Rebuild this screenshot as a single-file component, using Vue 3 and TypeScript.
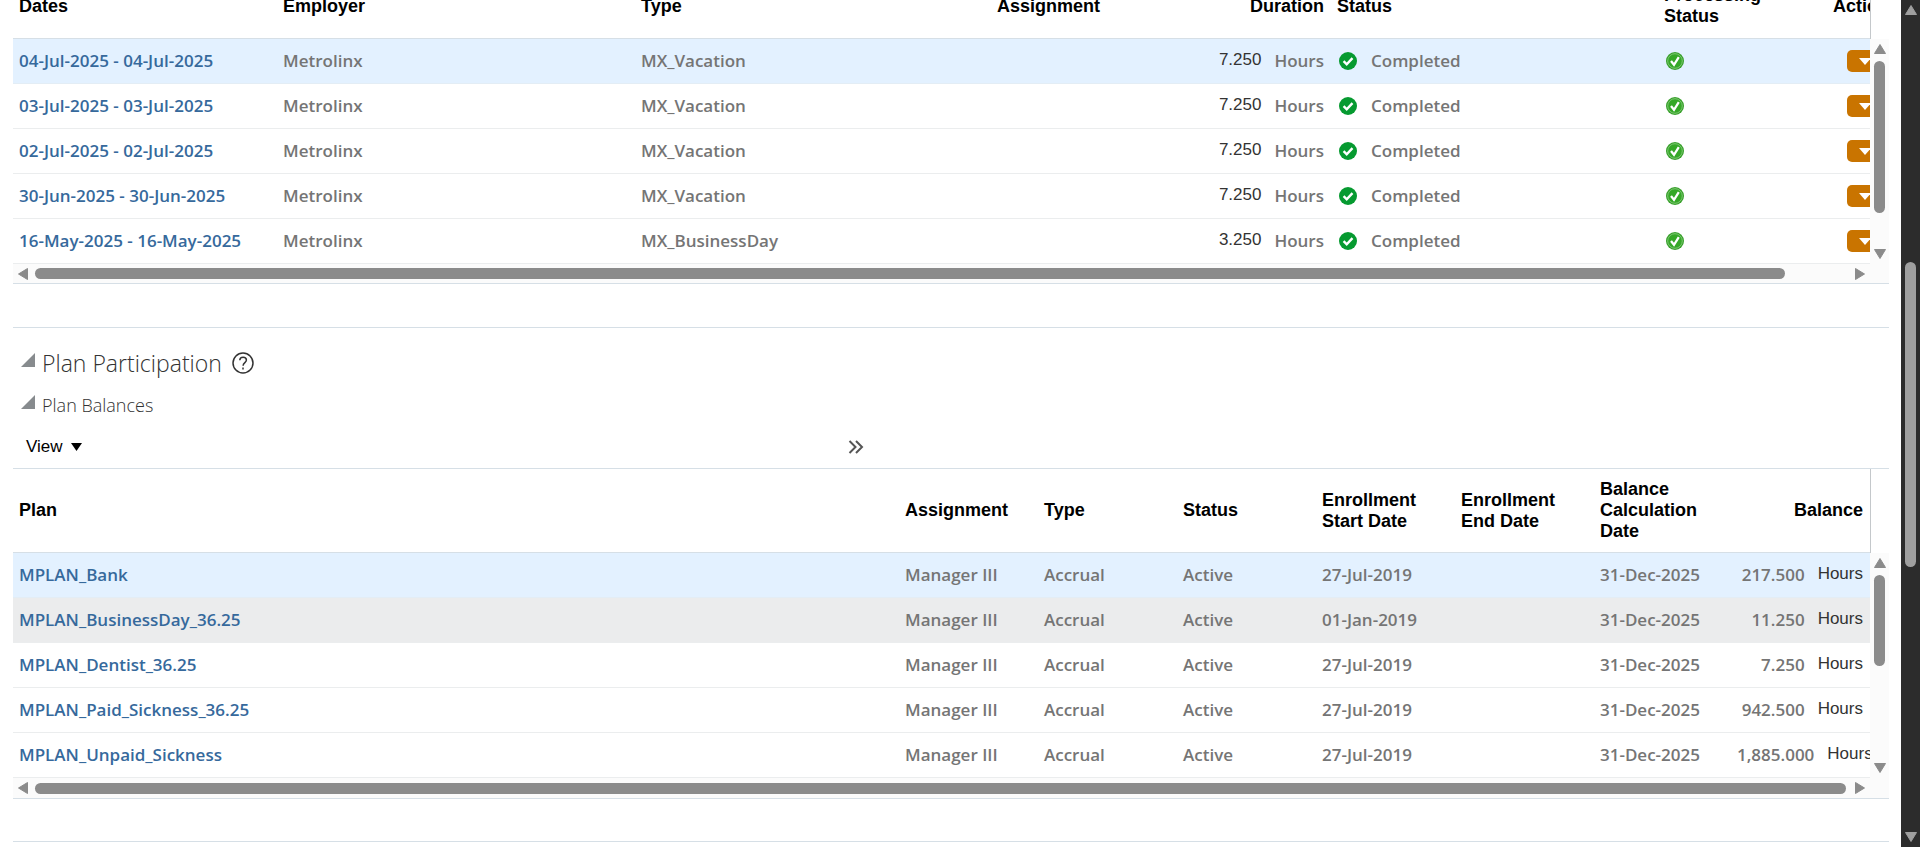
<script setup lang="ts">
import { ref } from 'vue'

interface Absence {
  dates: string
  type: string
  duration: string
}

interface Plan {
  name: string
  start: string
  balance: string
}

const absences: Absence[] = [
  { dates: '04-Jul-2025 - 04-Jul-2025', type: 'MX_Vacation', duration: '7.250' },
  { dates: '03-Jul-2025 - 03-Jul-2025', type: 'MX_Vacation', duration: '7.250' },
  { dates: '02-Jul-2025 - 02-Jul-2025', type: 'MX_Vacation', duration: '7.250' },
  { dates: '30-Jun-2025 - 30-Jun-2025', type: 'MX_Vacation', duration: '7.250' },
  { dates: '16-May-2025 - 16-May-2025', type: 'MX_BusinessDay', duration: '3.250' },
]

const plans: Plan[] = [
  { name: 'MPLAN_Bank', start: '27-Jul-2019', balance: '217.500' },
  { name: 'MPLAN_BusinessDay_36.25', start: '01-Jan-2019', balance: '11.250' },
  { name: 'MPLAN_Dentist_36.25', start: '27-Jul-2019', balance: '7.250' },
  { name: 'MPLAN_Paid_Sickness_36.25', start: '27-Jul-2019', balance: '942.500' },
  { name: 'MPLAN_Unpaid_Sickness', start: '27-Jul-2019', balance: '1,885.000' },
]

const selectedAbsence = ref(0)
const selectedPlan = ref(0)
const highlightedPlan = ref(1)
</script>

<template>
  <div class="window">
    <main class="page">
      <section class="panel absences" aria-label="Absences">
        <div class="viewport">
          <table class="grid grid-absences">
            <colgroup>
              <col class="w-dates" />
              <col />
              <col class="w-type" />
              <col class="w-std" />
              <col class="w-duration" />
              <col class="w-status" />
              <col class="w-std" />
              <col class="w-std" />
            </colgroup>
            <thead>
              <tr>
                <th>Dates</th>
                <th>Employer</th>
                <th>Type</th>
                <th>Assignment</th>
                <th class="right">Duration</th>
                <th>Status</th>
                <th>Processing Status</th>
                <th class="center">Actions</th>
              </tr>
            </thead>
            <tbody>
              <tr
                v-for="(row, i) in absences"
                :key="row.dates"
                :class="{ selected: i === selectedAbsence }"
                @click="selectedAbsence = i"
              >
                <td><a href="#">{{ row.dates }}</a></td>
                <td>Metrolinx</td>
                <td>{{ row.type }}</td>
                <td></td>
                <td class="right"><span class="plain">{{ row.duration }}</span><span class="unit">Hours</span></td>
                <td>
                  <div class="status">
                    <svg width="18" height="18" viewBox="0 0 18 18" aria-hidden="true">
                      <circle cx="9" cy="9" r="9" fill="#069a30" />
                      <path d="M4.6 9.2l3.1 3.1 5.8-6.2" fill="none" stroke="#fff" stroke-width="2.4" />
                    </svg>
                    Completed
                  </div>
                </td>
                <td>
                  <div class="status">
                    <svg width="18" height="18" viewBox="0 0 18 18" role="img" aria-label="Processed">
                      <circle cx="9" cy="9" r="9" fill="#38a02b" />
                      <circle cx="9" cy="9" r="7.3" fill="#35a827" stroke="#7cc772" stroke-width="1" />
                      <path d="M5 9l3 3.8 4.8-7.6" fill="none" stroke="#fff" stroke-width="2.3" />
                    </svg>
                  </div>
                </td>
                <td>
                  <button class="action" type="button" aria-label="Actions">
                    <svg width="12" height="7" viewBox="0 0 12 7" aria-hidden="true">
                      <path d="M0 0h12L6 7z" fill="#fff" />
                    </svg>
                  </button>
                </td>
              </tr>
            </tbody>
          </table>
        </div>
        <div class="gutter gutter-absences">
          <div class="gutter-head"></div>
          <div class="vscroll">
            <svg class="tri" width="12" height="10" viewBox="0 0 12 10"><path d="M6 0.5L11.5 9.5H0.5z" /></svg>
            <div class="vtrack"><div class="thumb" :style="{ height: '84%' }"></div></div>
            <svg class="tri" width="12" height="10" viewBox="0 0 12 10"><path d="M0.5 0.5h11L6 9.5z" /></svg>
          </div>
        </div>
        <div class="hscroll">
          <svg class="tri" width="10" height="12" viewBox="0 0 10 12"><path d="M9.5 0.5v11L0.5 6z" /></svg>
          <div class="htrack"><div class="thumb" :style="{ width: '96.5%' }"></div></div>
          <svg class="tri" width="10" height="12" viewBox="0 0 10 12"><path d="M0.5 0.5L9.5 6l-9 5.5z" /></svg>
        </div>
      </section>

      <section class="participation">
        <h1 class="title">
          <button class="disclose" type="button" aria-label="Collapse Plan Participation">
            <svg width="14" height="14" viewBox="0 0 14 14"><path d="M14 0v14H0z" fill="#878b8e" /></svg>
          </button>
          Plan Participation
          <button class="help" type="button" aria-label="Help">
            <svg width="22" height="22" viewBox="0 0 22 22" fill="none" stroke="#333" stroke-width="1.5">
              <circle cx="11" cy="11" r="10" />
              <path d="M7.8 8.3c0-1.9 1.4-3.1 3.3-3.1s3.3 1.2 3.3 2.9c0 2.5-3.3 2.6-3.3 5.6" />
              <path d="M11 15.6v1.8" />
            </svg>
          </button>
        </h1>
        <h2 class="subtitle">
          <button class="disclose" type="button" aria-label="Collapse Plan Balances">
            <svg width="14" height="14" viewBox="0 0 14 14"><path d="M14 0v14H0z" fill="#878b8e" /></svg>
          </button>
          Plan Balances
        </h2>
        <div class="toolbar">
          <button class="view" type="button">
            View
            <svg width="11" height="9" viewBox="0 0 11 9" aria-hidden="true"><path d="M0 1h11L5.5 9z" fill="#000" /></svg>
          </button>
          <button class="more" type="button" aria-label="More tools">
            <svg width="16" height="14" viewBox="0 0 16 14" fill="none" stroke="#555" stroke-width="2">
              <path d="M1.5 1l6 6-6 6M8 1l6 6-6 6" />
            </svg>
          </button>
        </div>

        <div class="panel balances">
          <div class="viewport">
            <table class="grid grid-balances">
              <colgroup>
                <col />
                <col v-for="n in 7" :key="n" class="w-std" />
              </colgroup>
              <thead>
                <tr>
                  <th>Plan</th>
                  <th>Assignment</th>
                  <th>Type</th>
                  <th>Status</th>
                  <th>Enrollment Start Date</th>
                  <th>Enrollment End Date</th>
                  <th>Balance Calculation Date</th>
                  <th class="right">Balance</th>
                </tr>
              </thead>
              <tbody>
                <tr
                  v-for="(plan, i) in plans"
                  :key="plan.name"
                  :class="{ selected: i === selectedPlan, hovered: i === highlightedPlan }"
                  @click="selectedPlan = i"
                >
                  <td><a href="#">{{ plan.name }}</a></td>
                  <td>Manager III</td>
                  <td>Accrual</td>
                  <td>Active</td>
                  <td>{{ plan.start }}</td>
                  <td></td>
                  <td>31-Dec-2025</td>
                  <td class="right">{{ plan.balance }}<span class="plain unit">Hours</span></td>
                </tr>
              </tbody>
            </table>
          </div>
          <div class="gutter gutter-balances">
            <div class="gutter-head"></div>
            <div class="vscroll">
              <svg class="tri" width="12" height="10" viewBox="0 0 12 10"><path d="M6 0.5L11.5 9.5H0.5z" /></svg>
              <div class="vtrack"><div class="thumb" :style="{ height: '50%' }"></div></div>
              <svg class="tri" width="12" height="10" viewBox="0 0 12 10"><path d="M0.5 0.5h11L6 9.5z" /></svg>
            </div>
          </div>
          <div class="hscroll">
            <svg class="tri" width="10" height="12" viewBox="0 0 10 12"><path d="M9.5 0.5v11L0.5 6z" /></svg>
            <div class="htrack"><div class="thumb" :style="{ width: '99.9%' }"></div></div>
            <svg class="tri" width="10" height="12" viewBox="0 0 10 12"><path d="M0.5 0.5L9.5 6l-9 5.5z" /></svg>
          </div>
        </div>
      </section>

      <hr class="rule" />
    </main>

    <div class="vscroll window-scroll">
      <svg class="tri" width="12" height="10" viewBox="0 0 12 10"><path d="M6 0.5L11.5 9.5H0.5z" /></svg>
      <div class="vtrack"><div class="thumb" :style="{ height: '38%', marginTop: '240px' }"></div></div>
      <svg class="tri" width="12" height="10" viewBox="0 0 12 10"><path d="M0.5 0.5h11L6 9.5z" /></svg>
    </div>
  </div>
</template>

<style>
body {
  margin: 0;
  background: #fff;
}
</style>

<style scoped>
.window {
  display: flex;
  height: 100vh;
  overflow: hidden;
  font-family: 'Liberation Sans', Arial, sans-serif;
  font-size: 17px;
  color: #333;
}

.page {
  flex: 1;
  min-width: 0;
  padding: 0 12px 0 13px;
  overflow: hidden;
}

button {
  display: flex;
  align-items: center;
  padding: 0;
  border: 0;
  background: none;
  font: inherit;
  color: inherit;
  cursor: pointer;
}

svg {
  display: block;
  flex: none;
}

/* Scrollable grid: viewport, vertical gutter, horizontal bar below */
.panel {
  display: grid;
  grid-template-columns: minmax(0, 1fr) 19px;
  border-bottom: 1px solid #d6dfe6;
}

/* The page is scrolled so that the first header is partly out of view */
.absences {
  margin-top: -26px;
}

.balances {
  border-top: 1px solid #d6dfe6;
}

.viewport {
  overflow: hidden;
}

.grid {
  width: 100%;
  border-collapse: separate;
  border-spacing: 0;
  table-layout: fixed;
}

.grid-absences {
  width: calc(100% + 66px);
}

.w-dates {
  width: 264px;
}

.w-type {
  width: 356px;
}

.w-duration {
  width: 201px;
}

.w-status {
  width: 327px;
}

.w-std {
  width: 139px;
}

th,
td {
  box-sizing: border-box;
  padding: 0 7px 0 6px;
  text-align: left;
  vertical-align: middle;
}

.grid-balances :is(th, td):not(:first-child, :last-child) {
  padding-left: 8px;
}

th {
  height: 84px;
  border-bottom: 1px solid #d6dfe6;
  font-size: 18px;
  line-height: 21px;
  color: #000;
}

.grid-absences th {
  height: 65px;
}

td {
  height: 45px;
  border-bottom: 1px solid #ebedee;
  font-family: 'Open Sans', 'Noto Sans', sans-serif;
  font-size: 17px;
  font-weight: 600;
  line-height: 24px;
  color: #757575;
  white-space: nowrap;
}

.right {
  text-align: right;
}

.center {
  text-align: center;
}

.selected td {
  background: #e3f1ff;
  border-bottom-color: #e3edf5;
}

.hovered td {
  background: #ebeced;
}

td a {
  color: #36699c;
  text-decoration: none;
}

.plain {
  font-family: 'Liberation Sans', Arial, sans-serif;
  font-size: 17px;
  font-weight: 400;
  line-height: 18px;
  color: #333;
  vertical-align: 2px;
}

.unit {
  margin-left: 13px;
}

.status {
  display: flex;
  align-items: center;
  gap: 14px;
  padding-left: 2px;
}

.action {
  justify-content: center;
  width: 38px;
  height: 22px;
  margin: 0 auto 1px;
  padding: 2px 3px 0 0;
  border-radius: 5px;
  background: #c97400;
}

/* Scroll bars */
.gutter {
  display: flex;
  flex-direction: column;
}

.gutter-head {
  box-sizing: border-box;
  height: 84px;
  border-left: 1px solid #c4c8cb;
}

.gutter-absences .gutter-head {
  height: 65px;
}

.vscroll {
  box-sizing: border-box;
  display: flex;
  flex: 1;
  flex-direction: column;
  align-items: center;
  gap: 7px;
  padding: 5px 3px;
  background: #fbfbfb;
}

.hscroll {
  box-sizing: border-box;
  display: flex;
  grid-column: 1 / -1;
  align-items: center;
  gap: 7px;
  height: 19px;
  padding: 0 24px 0 5px;
  background: #fbfbfb;
}

.balances .hscroll {
  height: 20px;
}

.vtrack {
  flex: 1;
  width: 11px;
}

.htrack {
  flex: 1;
  height: 11px;
}

.thumb {
  height: 100%;
  border-radius: 6px;
  background: #8b8b8b;
}

.tri {
  fill: #8b8b8b;
  stroke: #8b8b8b;
  stroke-linejoin: round;
}

.window-scroll {
  flex: none;
  width: 19px;
  background: #2c2c2c;
}

.window-scroll .thumb {
  background: #9f9f9f;
}

.window-scroll .tri {
  fill: #9f9f9f;
  stroke: #9f9f9f;
}

/* Plan participation */
.participation {
  margin-top: 43px;
  padding-top: 15px;
  border-top: 1px solid #d6dfe6;
}

.title,
.subtitle {
  display: flex;
  align-items: center;
  margin: 0;
  padding-left: 8px;
  font-family: 'Open Sans', 'Noto Sans', sans-serif;
  font-weight: 300;
}

.title {
  height: 40px;
  font-size: 23px;
}

.subtitle {
  height: 44px;
  font-size: 18px;
}

.disclose {
  margin-right: 7px;
  padding-bottom: 6px;
}

.help {
  margin-left: 10px;
}

.toolbar {
  display: flex;
  align-items: center;
  justify-content: space-between;
  box-sizing: border-box;
  width: 46%;
  height: 41px;
  padding: 0 12px 2px 13px;
}

.view {
  gap: 8px;
  color: #000;
}

.rule {
  margin: 42px 0 0;
  border: 0;
  border-top: 1px solid #d6dfe6;
}
</style>
